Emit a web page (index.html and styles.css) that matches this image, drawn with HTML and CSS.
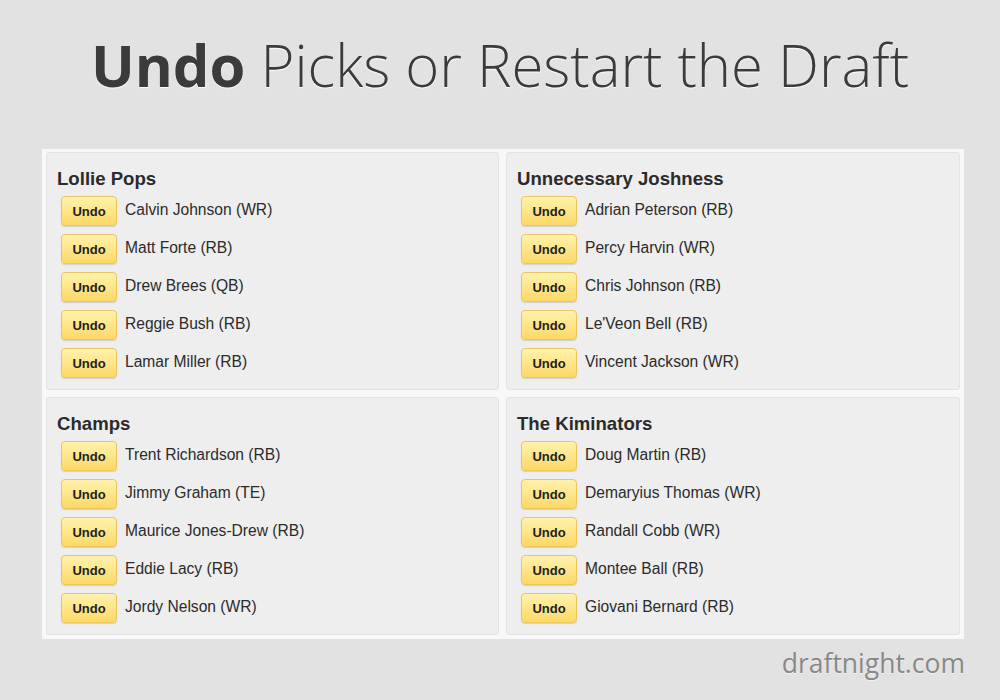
FILE: index.html
```html
<!DOCTYPE html>
<html>
<head>
<meta charset="utf-8">
<link rel="stylesheet" href="styles.css">
</head>
<body>
<h1 class="title"><strong>Undo</strong> Picks or Restart the Draft</h1>
<div class="board">
  <div class="team">
    <h3>Lollie Pops</h3>
    <ul>
      <li><button>Undo</button><span>Calvin Johnson (WR)</span></li>
      <li><button>Undo</button><span>Matt Forte (RB)</span></li>
      <li><button>Undo</button><span>Drew Brees (QB)</span></li>
      <li><button>Undo</button><span>Reggie Bush (RB)</span></li>
      <li><button>Undo</button><span>Lamar Miller (RB)</span></li>
    </ul>
  </div>
  <div class="team">
    <h3>Unnecessary Joshness</h3>
    <ul>
      <li><button>Undo</button><span>Adrian Peterson (RB)</span></li>
      <li><button>Undo</button><span>Percy Harvin (WR)</span></li>
      <li><button>Undo</button><span>Chris Johnson (RB)</span></li>
      <li><button>Undo</button><span>Le'Veon Bell (RB)</span></li>
      <li><button>Undo</button><span>Vincent Jackson (WR)</span></li>
    </ul>
  </div>
  <div class="team">
    <h3>Champs</h3>
    <ul>
      <li><button>Undo</button><span>Trent Richardson (RB)</span></li>
      <li><button>Undo</button><span>Jimmy Graham (TE)</span></li>
      <li><button>Undo</button><span>Maurice Jones-Drew (RB)</span></li>
      <li><button>Undo</button><span>Eddie Lacy (RB)</span></li>
      <li><button>Undo</button><span>Jordy Nelson (WR)</span></li>
    </ul>
  </div>
  <div class="team">
    <h3>The Kiminators</h3>
    <ul>
      <li><button>Undo</button><span>Doug Martin (RB)</span></li>
      <li><button>Undo</button><span>Demaryius Thomas (WR)</span></li>
      <li><button>Undo</button><span>Randall Cobb (WR)</span></li>
      <li><button>Undo</button><span>Montee Ball (RB)</span></li>
      <li><button>Undo</button><span>Giovani Bernard (RB)</span></li>
    </ul>
  </div>
</div>
<div class="footer">draftnight.com</div>
</body>
</html>
```
FILE: styles.css
```css
html, body {
  margin: 0;
  padding: 0;
  background: #e2e2e2;
  width: 1000px;
  height: 700px;
  overflow: hidden;
}
.title {
  margin: 0;
  padding-top: 20px;
  height: 128px;
  box-sizing: border-box;
  text-align: center;
  font-family: "Open Sans", sans-serif;
  font-weight: 300;
  font-size: 58px;
  line-height: 90px;
  color: #3b3b3b;
  text-shadow: 0 1px 1px #fff;
}
.title strong {
  font-weight: 700;
}
.board {
  margin: 21px 0 0 42px;
  width: 922px;
  box-sizing: border-box;
  background: #f8f8f8;
  padding: 3px 4px 4px 4px;
  display: grid;
  grid-template-columns: 453px 454px;
  column-gap: 7px;
  row-gap: 7px;
}
.team {
  background: #eeeeee;
  border: 1px solid #e3e3e3;
  border-radius: 3px;
  padding: 15px 10px 11px 10px;
  height: 238px;
  box-sizing: border-box;
  font-family: "Liberation Sans", Arial, sans-serif;
}
.team h3 {
  margin: 0 0 6px 0;
  font-size: 18.6px;
  line-height: 22px;
  font-weight: 700;
  color: #2b2b2b;
}
.team ul {
  list-style: none;
  margin: 0;
  padding: 0 0 0 4px;
  display: flex;
  flex-direction: column;
  gap: 8px;
}
.team li {
  display: flex;
  align-items: center;
  gap: 8px;
  font-size: 15.6px;
  color: #2b2b2b;
}
.team li span {
  margin-top: -2px;
}
.team button {
  width: 56px;
  height: 30px;
  padding: 0;
  border: 1px solid #ecc65a;
  border-radius: 4px;
  background: linear-gradient(#fff2ad, #fdd866);
  box-shadow: 0 1px 1px rgba(0,0,0,0.12);
  font-family: "Liberation Sans", Arial, sans-serif;
  font-weight: 700;
  font-size: 13px;
  color: #1e1e1e;
}
.footer {
  margin: 6px 35px 0 0;
  text-align: right;
  font-family: "Open Sans", sans-serif;
  font-size: 26.5px;
  line-height: 36px;
  color: #888888;
  text-shadow: 0 1px 0 #f2f2f2;
}
```
